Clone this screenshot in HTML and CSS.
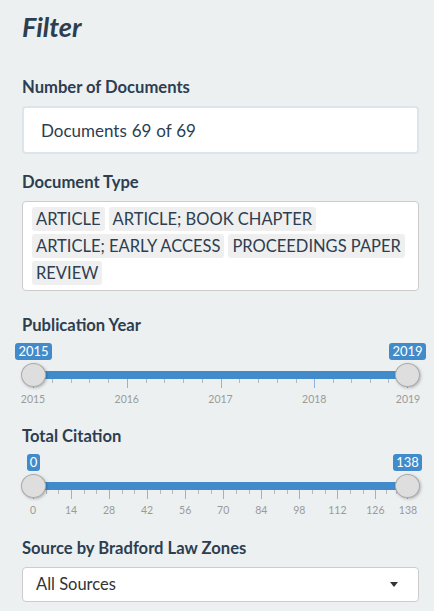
FILE: index.html
```
<!DOCTYPE html>
<html>
<head>
<meta charset="utf-8">
<link rel="stylesheet" href="styles.css">
</head>
<body>
<div class="panel">
  <h2 class="title">Filter</h2>

  <div class="group">
    <div class="label">Number of Documents</div>
    <div class="input">Documents 69 of 69</div>
  </div>

  <div class="group">
    <div class="label">Document Type</div>
    <div class="multi">
      <span class="tag">ARTICLE</span>
      <span class="tag">ARTICLE; BOOK CHAPTER</span>
      <span class="tag">ARTICLE; EARLY ACCESS</span>
      <span class="tag">PROCEEDINGS PAPER</span>
      <span class="tag">REVIEW</span>
    </div>
  </div>

  <div class="group group-slider">
    <div class="label">Publication Year</div>
    <div class="slider">
      <div class="badges">
        <div class="bpos"><span class="badge">2015</span></div>
        <div class="bpos"><span class="badge">2019</span></div>
      </div>
      <div class="track">
        <div class="handle"></div>
        <div class="handle"></div>
      </div>
      <div class="grid grid-year">
        <div class="cell"><i class="big"></i><i></i><i></i><i></i><i></i><b></b></div>
        <div class="cell"><i class="big"></i><i></i><i></i><i></i><i></i><b></b></div>
        <div class="cell"><i class="big"></i><i></i><i></i><i></i><i></i><b></b></div>
        <div class="cell"><i class="big"></i><i></i><i></i><i></i><i></i><i class="big"></i></div>
      </div>
      <div class="grid grid-year nums">
        <div class="cell"><span class="num">2015</span></div>
        <div class="cell"><span class="num">2016</span></div>
        <div class="cell"><span class="num">2017</span></div>
        <div class="cell"><span class="num">2018</span><span class="num">2019</span></div>
      </div>
    </div>
  </div>

  <div class="group group-slider">
    <div class="label">Total Citation</div>
    <div class="slider">
      <div class="badges">
        <div class="bpos"><span class="badge">0</span></div>
        <div class="bpos"><span class="badge">138</span></div>
      </div>
      <div class="track">
        <div class="handle"></div>
        <div class="handle"></div>
      </div>
      <div class="grid grid-cit">
        <div class="cell"><i class="big"></i><i></i><i></i><b></b></div>
        <div class="cell"><i class="big"></i><i></i><i></i><b></b></div>
        <div class="cell"><i class="big"></i><i></i><i></i><b></b></div>
        <div class="cell"><i class="big"></i><i></i><i></i><b></b></div>
        <div class="cell"><i class="big"></i><i></i><i></i><b></b></div>
        <div class="cell"><i class="big"></i><i></i><i></i><b></b></div>
        <div class="cell"><i class="big"></i><i></i><i></i><b></b></div>
        <div class="cell"><i class="big"></i><i></i><i></i><b></b></div>
        <div class="cell"><i class="big"></i><i></i><i></i><b></b></div>
        <div class="cell"><i class="big"></i><i></i><i></i><i class="big"></i></div>
      </div>
      <div class="grid grid-cit nums">
        <div class="cell"><span class="num">0</span></div>
        <div class="cell"><span class="num">14</span></div>
        <div class="cell"><span class="num">28</span></div>
        <div class="cell"><span class="num">42</span></div>
        <div class="cell"><span class="num">56</span></div>
        <div class="cell"><span class="num">70</span></div>
        <div class="cell"><span class="num">84</span></div>
        <div class="cell"><span class="num">98</span></div>
        <div class="cell"><span class="num">112</span></div>
        <div class="cell"><span class="num">126</span><span class="num">138</span></div>
      </div>
    </div>
  </div>

  <div class="group">
    <div class="label">Source by Bradford Law Zones</div>
    <div class="select">
      <span class="select-text">All Sources</span>
      <span class="caret"></span>
    </div>
  </div>
</div>
</body>
</html>
```
FILE: styles.css
```
html, body {
  margin: 0;
  padding: 0;
}
body {
  background: #ecf0f1;
  font-family: Lato, "Noto Sans", sans-serif;
  color: #2c3e50;
}
.panel {
  padding: 11px 15px 0 22px;
  display: flex;
  flex-direction: column;
}
.title {
  font: italic 700 27px/31px Lato, sans-serif;
  margin: 0 0 35px;
}
.group {
  display: flex;
  flex-direction: column;
  margin-bottom: 18px;
}
.group-slider {
  margin-bottom: 20.5px;
}
.label {
  font-weight: 700;
  font-size: 16.6px;
  line-height: 21px;
  margin-bottom: 8px;
}
.group-slider .label {
  margin-bottom: 6.5px;
}
.input {
  box-sizing: border-box;
  height: 48px;
  background: #fff;
  border: 2px solid #dce4ec;
  border-radius: 4px;
  padding-left: 17px;
  display: flex;
  align-items: center;
  font-size: 17px;
  word-spacing: 0.5px;
}
.multi {
  box-sizing: border-box;
  background: #fff;
  border: 1px solid #cccccc;
  border-radius: 4px;
  padding: 5px 9px;
  display: flex;
  flex-wrap: wrap;
  gap: 3px 4px;
  margin-bottom: 6px;
}
.tag {
  height: 24px;
  line-height: 24px;
  padding: 0 4px;
  background: #efefef;
  border-radius: 3px;
  font-size: 16.5px;
  color: #2c3e50;
}
/* slider */
.slider {
  display: flex;
  flex-direction: column;
}
.badges {
  display: flex;
  justify-content: space-between;
  padding: 0 11.5px;
  height: 17.3px;
}
.bpos {
  width: 0;
  display: flex;
  justify-content: center;
}
.badge {
  white-space: nowrap;
  background: #428bca;
  color: #fff;
  font-size: 13px;
  line-height: 17.3px;
  padding: 0 3px;
  border-radius: 3px;
}
.track {
  margin: 3px -1px 0;
  height: 24px;
  display: flex;
  justify-content: space-between;
  align-items: center;
  background: linear-gradient(#428bca, #428bca) center / calc(100% - 25px) 8px no-repeat;
}
.handle {
  position: relative;
  z-index: 1;
  box-sizing: border-box;
  width: 25px;
  height: 24px;
  border-radius: 50%;
  background: #dedede;
  border: 1px solid #ababab;
  box-shadow: 1px 1px 3px rgba(0, 0, 0, 0.25);
}
.grid {
  display: grid;
  padding: 0 11px 0 11px;
}
.grid-year {
  grid-template-columns: repeat(4, 1fr);
}
.grid-cit {
  grid-template-columns: repeat(9, 14fr) 12fr;
}
.grid:not(.nums) {
  margin-top: -8px;
  height: 9px;
}
.cell {
  display: flex;
  justify-content: space-between;
  align-items: flex-start;
}
.cell i {
  display: block;
  width: 1px;
  height: 4px;
  background: #b3b9bf;
}
.cell i.big {
  height: 9px;
  background: #8db5de;
}
.cell b {
  display: block;
  width: 0;
}
.nums {
  margin-top: 5px;
  height: 13px;
}
.num {
  width: 0;
  display: flex;
  justify-content: center;
  white-space: nowrap;
  font-size: 10.5px;
  line-height: 13px;
  color: #9a9a9a;
}
.select {
  box-sizing: border-box;
  height: 35.5px;
  background: #fff;
  border: 1px solid #cccccc;
  border-radius: 4px;
  padding: 0 20px 0 13px;
  display: flex;
  align-items: center;
  justify-content: space-between;
  font-size: 16.5px;
  color: #333;
}
.caret {
  width: 0;
  height: 0;
  border-left: 4.5px solid transparent;
  border-right: 4.5px solid transparent;
  border-top: 5px solid #333;
}
```
